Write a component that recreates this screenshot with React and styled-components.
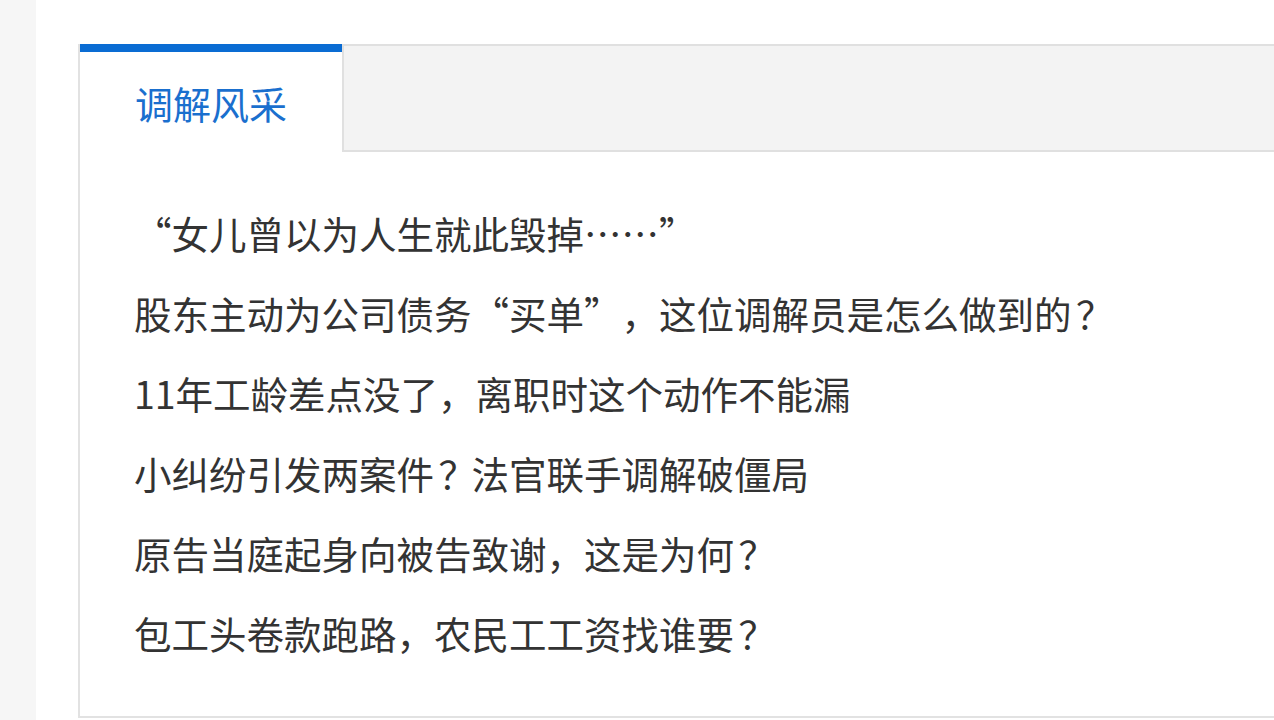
import React from 'react';
import styled, { createGlobalStyle } from 'styled-components';

const GlobalStyle = createGlobalStyle`
  html, body {
    margin: 0;
    padding: 0;
    overflow: hidden;
    background: #ffffff;
  }
  body {
    font-family: "Noto Sans CJK SC", "Noto Sans", sans-serif;
  }
`;

const Page = styled.div`
  display: flex;
  width: 100vw;
  height: 100vh;
`;

const SideStrip = styled.div`
  flex: 0 0 36px;
  background: #f6f6f6;
`;

const Main = styled.div`
  flex: 1;
  padding: 44px 0 0 42px;
  min-width: 0;
`;

const Panel = styled.div`
  width: 1240px;
  border-left: 2px solid #e2e2e2;
  border-bottom: 2px solid #e2e2e2;
  background: #fff;
`;

const TabBar = styled.div`
  display: flex;
  height: 108px;
`;

const Tab = styled.div`
  flex: 0 0 262px;
  display: flex;
  align-items: center;
  justify-content: center;
  background: #fff;
  border-top: 8px solid #0a6cd3;
  color: #1a6fce;
  font-size: 38px;
`;

const TabRest = styled.div`
  flex: 1;
  background: #f3f3f3;
  border: 2px solid #e0e0e0;
  border-right: none;
`;

const List = styled.ul`
  list-style: none;
  margin: 0;
  padding: 41px 0 43px 54px;
`;

const Item = styled.li`
  height: 80px;
  line-height: 80px;
  font-size: 37.5px;
  color: #333;
  white-space: nowrap;
`;

// full-width punctuation box, as the original page's font draws it
const Punct = styled.span`
  display: inline-block;
  width: 1em;
  text-align: ${(p) => p.$align};
  padding-left: ${(p) => p.$indent || 0};
  letter-spacing: ${(p) => (p.$indent ? `-${p.$indent}` : 'normal')};
  box-sizing: border-box;
`;

const punctStyle = {
  '“': { align: 'right' },
  '”': { align: 'left' },
  '？': { align: 'left', indent: '0.12em' },
};

const items = [
  '“女儿曾以为人生就此毁掉……”',
  '股东主动为公司债务“买单”，这位调解员是怎么做到的？',
  '11年工龄差点没了，离职时这个动作不能漏',
  '小纠纷引发两案件？法官联手调解破僵局',
  '原告当庭起身向被告致谢，这是为何？',
  '包工头卷款跑路，农民工工资找谁要？',
];

const renderText = (text) =>
  text.split(/([“”？])/).map((part, i) => {
    const s = punctStyle[part];
    return s ? (
      <Punct key={i} $align={s.align} $indent={s.indent}>
        {part}
      </Punct>
    ) : (
      part
    );
  });

export default function App() {
  return (
    <>
      <GlobalStyle />
      <Page>
        <SideStrip />
        <Main>
          <Panel>
            <TabBar>
              <Tab>调解风采</Tab>
              <TabRest />
            </TabBar>
            <List>
              {items.map((t) => (
                <Item key={t}>{renderText(t)}</Item>
              ))}
            </List>
          </Panel>
        </Main>
      </Page>
    </>
  );
}
